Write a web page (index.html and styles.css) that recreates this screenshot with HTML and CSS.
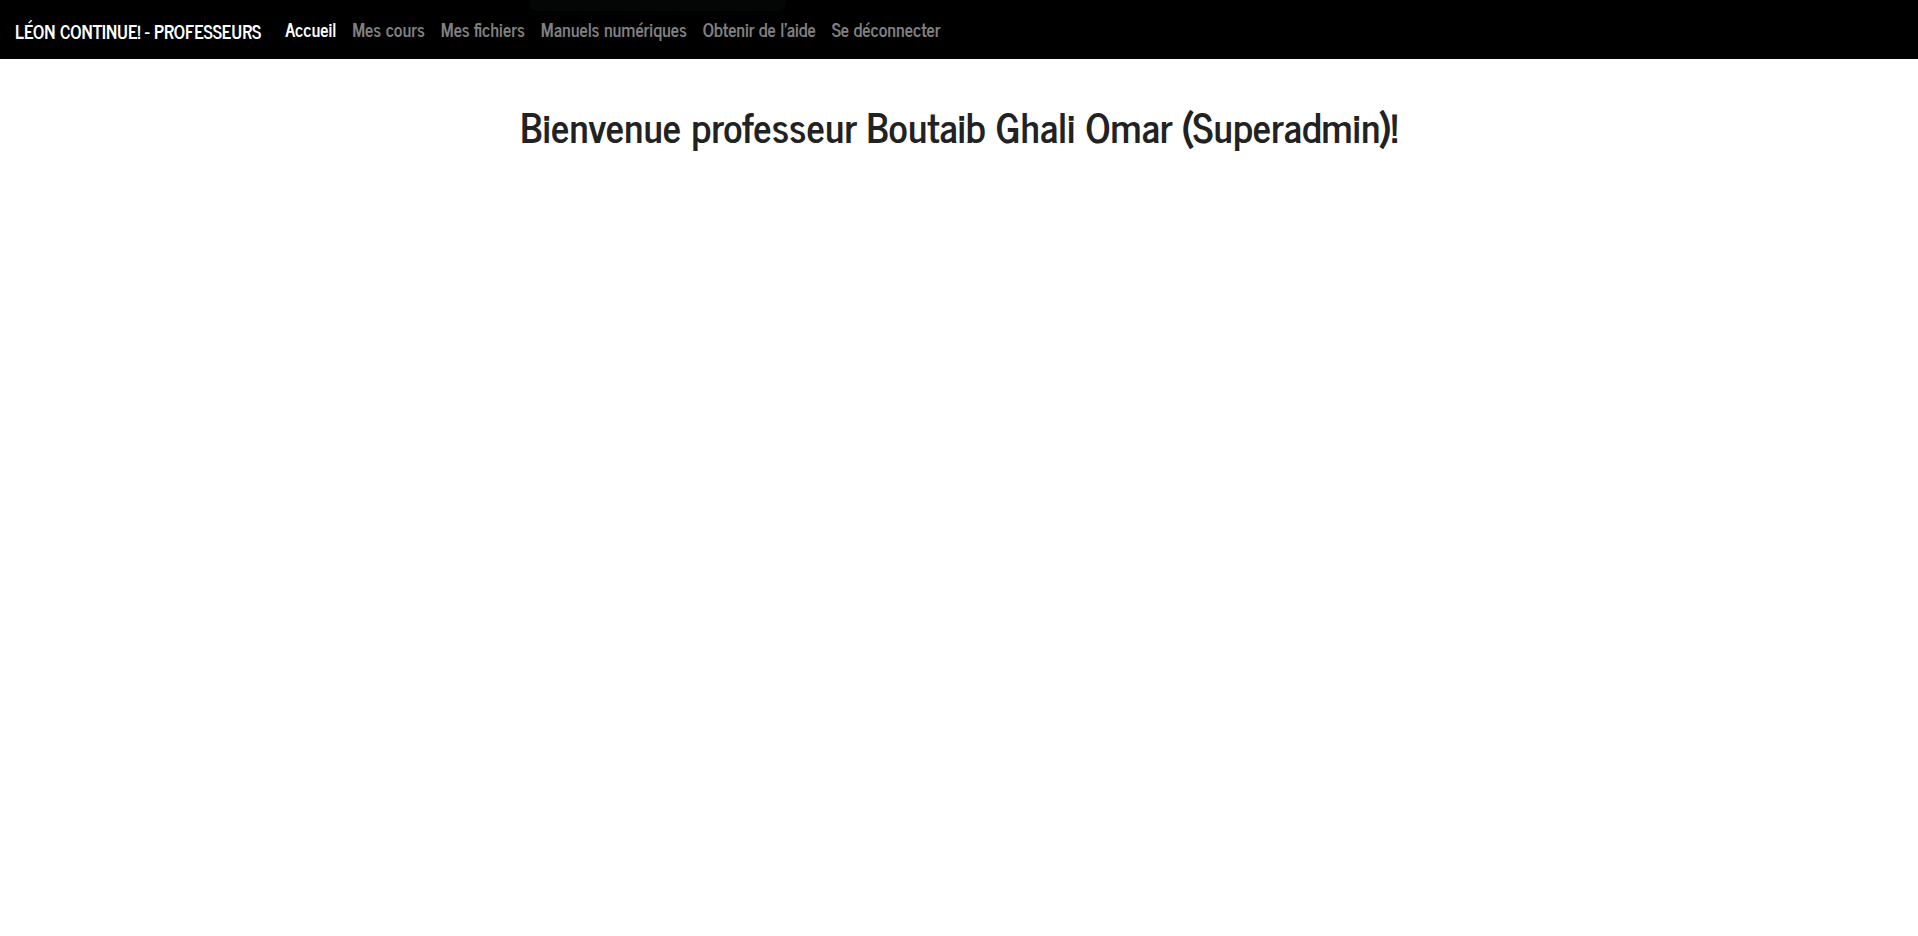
FILE: index.html
```html
<!DOCTYPE html>
<html lang="fr">
<head>
<meta charset="utf-8">
<meta name="viewport" content="width=device-width, initial-scale=1">
<title>Léon continue! - Professeurs</title>
<link rel="stylesheet" href="styles.css">
</head>
<body>
<header class="navbar">
  <span class="notch"></span>
  <a class="brand" href="#">LÉON CONTINUE! - PROFESSEURS</a>
  <nav>
    <ul class="nav-list">
      <li><a class="nav-link active" href="#" aria-current="page">Accueil</a></li>
      <li><a class="nav-link" href="#">Mes cours</a></li>
      <li><a class="nav-link" href="#">Mes fichiers</a></li>
      <li><a class="nav-link" href="#">Manuels numériques</a></li>
      <li><a class="nav-link" href="#">Obtenir de l’aide</a></li>
      <li><a class="nav-link" href="#">Se déconnecter</a></li>
    </ul>
  </nav>
</header>
<main class="content">
  <h1 class="welcome">Bienvenue professeur Boutaib Ghali Omar (Superadmin)!</h1>
</main>
</body>
</html>
```
FILE: styles.css
```css
body {
  margin: 0;
  background: #fff;
  color: #222;
  font-family: "News Cycle", "Arial Narrow", "Liberation Sans", sans-serif;
}

.navbar {
  position: relative;
  display: flex;
  align-items: center;
  gap: 24px;
  min-height: 59px;
  padding: 0 15px;
  background: #000;
}

.notch {
  position: absolute;
  top: 0;
  left: 530px;
  width: 256px;
  height: 11px;
  border-radius: 0 0 8px 8px;
  background: #040606;
}

.brand {
  padding-top: 3px;
  color: #fff;
  font-size: 18px;
  font-weight: 700;
  line-height: 28px;
  text-decoration: none;
}

.nav-list {
  display: flex;
  flex-wrap: wrap;
  gap: 16px;
  margin: 0;
  padding: 0 0 2px;
  list-style: none;
}

.nav-link {
  display: block;
  color: #808080;
  font-size: 18px;
  font-weight: 700;
  line-height: 28px;
  text-decoration: none;
}

.nav-link.active {
  color: #fff;
}

.content {
  padding: 37px 15px;
}

.welcome {
  margin: 0;
  font-size: 40px;
  font-weight: 700;
  line-height: 60px;
  text-align: center;
}
```
